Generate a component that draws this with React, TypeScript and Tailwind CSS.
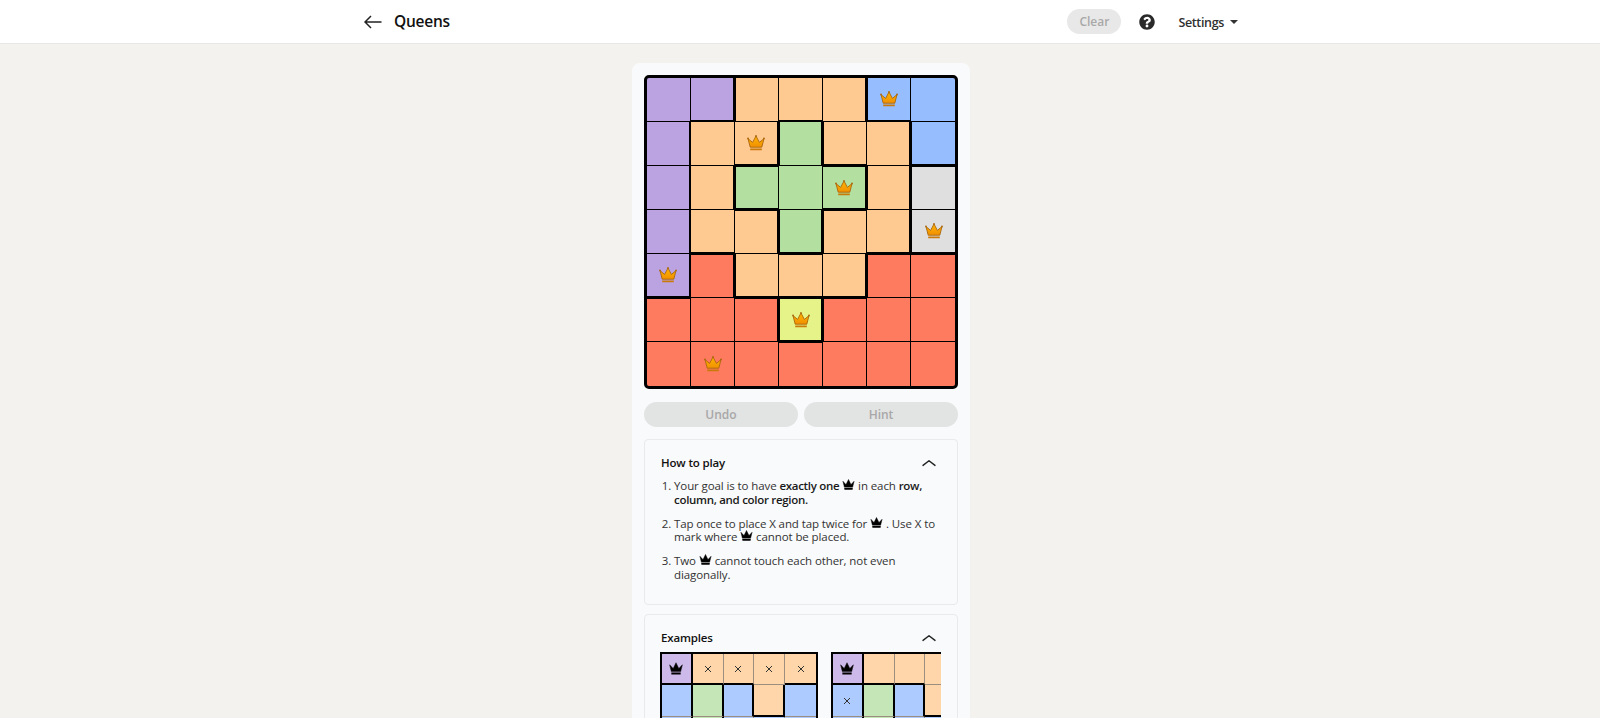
import React from 'react';
import { FaQuestionCircle } from 'react-icons/fa';

const board = ['PPOOOBB', 'POOGOOB', 'POGGGOW', 'POOGOOW', 'PROOORR', 'RRRYRRR', 'RRRRRRR'];
const queens = ['0-5', '1-2', '2-4', '3-6', '4-0', '5-3', '6-1'];

const cellColors: Record<string, string> = {
  P: 'bg-[#bba3e2]',
  O: 'bg-[#ffc992]',
  B: 'bg-[#96beff]',
  G: 'bg-[#b3dfa0]',
  W: 'bg-[#dfdfdf]',
  R: 'bg-[#ff7b60]',
  Y: 'bg-[#e6f388]',
};

const exampleColors: Record<string, string> = {
  P: 'bg-[#cdb9ea]',
  O: 'bg-[#ffd6aa]',
  B: 'bg-[#aecbff]',
  G: 'bg-[#c5e6b6]',
};

function GoldCrown() {
  return (
    <svg viewBox="0 0 18 16" className="h-4 w-[18px]">
      <defs>
        <linearGradient id="gold" x1="0" y1="0" x2="0" y2="1">
          <stop offset="0" stopColor="#ffb400" />
          <stop offset="1" stopColor="#f09000" />
        </linearGradient>
      </defs>
      <path d="M1 3.6 L5.6 7.4 L9 1 L12.4 7.4 L17 3.6 L14.8 12.2 H3.2 Z" fill="url(#gold)" stroke="#a9670c" strokeWidth="0.9" strokeLinejoin="round" />
      <circle cx="1" cy="3.4" r="0.9" fill="#a9670c" />
      <circle cx="17" cy="3.4" r="0.9" fill="#a9670c" />
      <circle cx="9" cy="0.9" r="0.9" fill="#a9670c" />
      <rect x="3.2" y="13.4" width="11.6" height="1.9" rx="0.3" fill="#c97a08" />
    </svg>
  );
}

function BlackCrown({ className }: { className: string }) {
  return (
    <svg viewBox="0 0 18 16" className={className}>
      <path d="M0.8 3.2 L5.4 8 L9 0.6 L12.6 8 L17.2 3.2 L15 12 H3 Z" fill="#000" stroke="#000" strokeWidth="0.6" strokeLinejoin="round" />
      <rect x="3" y="13.2" width="12" height="2.4" rx="0.3" fill="#000" />
    </svg>
  );
}

function InlineCrown() {
  return <BlackCrown className="inline-block h-[11px] w-[13px] align-[0px]" />;
}

function Chevron() {
  return (
    <svg viewBox="0 0 14 8" className="mr-[5px] h-[8px] w-[14px]">
      <path d="M1 6.4 L7 1.8 L13 6.4" fill="none" stroke="#222" strokeWidth="1.4" strokeLinecap="round" strokeLinejoin="round" />
    </svg>
  );
}

function Cross() {
  return (
    <svg viewBox="0 0 8 8" className="h-2 w-2">
      <path d="M1 1 L7 7 M7 1 L1 7" stroke="#333" strokeWidth="1" />
    </svg>
  );
}

function Board() {
  return (
    <div className="grid h-[314px] w-[314px] grid-cols-7 grid-rows-7 overflow-hidden rounded-[5px] border-[3px] border-black bg-black">
      {board.map((row, r) =>
        row.split('').map((c, i) => {
          const right = i < 6 && row[i + 1] !== c;
          const left = i > 1 && row[i - 1] !== c;
          const bottom = r < 6 && board[r + 1][i] !== c;
          const top = r > 1 && board[r - 1][i] !== c;
          return (
            <div
              key={`${r}-${i}`}
              className={`flex items-center justify-center border-black ${cellColors[c]} ${right ? 'border-r-2' : i < 6 ? 'border-r' : ''} ${left ? 'border-l' : ''} ${bottom ? 'border-b-2' : r < 6 ? 'border-b' : ''} ${top ? 'border-t' : ''}`}
            >
              {queens.includes(`${r}-${i}`) && <GoldCrown />}
            </div>
          );
        })
      )}
    </div>
  );
}

function ExampleGrid({ rows, marks }: { rows: string[]; marks: Record<string, 'q' | 'x'> }) {
  return (
    <div className="grid w-[158px] shrink-0 grid-cols-5 grid-rows-[31px_32px_32px] border-2 border-b-0 border-black">
      {rows.map((row, r) =>
        row.split('').map((c, i) => {
          const right = i < 4 && row[i + 1] !== c;
          const bottom = r < rows.length - 1 && rows[r + 1][i] !== c;
          const mark = marks[`${r}-${i}`];
          return (
            <div
              key={`${r}-${i}`}
              className={`flex items-center justify-center ${exampleColors[c]} ${right ? 'border-r-2 border-r-black' : i < 4 ? 'border-r border-r-[#9c8f80]' : ''} ${bottom ? 'border-b-2 border-b-black' : r < rows.length - 1 ? 'border-b border-b-[#9c8f80]' : ''}`}
            >
              {mark === 'q' && <BlackCrown className="h-[13px] w-[14px]" />}
              {mark === 'x' && <Cross />}
            </div>
          );
        })
      )}
    </div>
  );
}

export default function App() {
  return (
    <div className="h-screen overflow-hidden bg-[#f4f2ee] font-['Open_Sans','Noto_Sans',sans-serif] text-[#1f1f1f]">
      <header className="h-[44px] border-b border-[#e8e8e6] bg-white">
        <div className="mx-auto flex h-full w-[896px] items-center justify-between pl-[12px] pr-[10px]">
          <div className="flex items-center">
            <svg viewBox="0 0 18 14" className="h-[14px] w-[18px]">
              <path d="M17.5 7 H1 M7 1 L1 7 L7 13" fill="none" stroke="#222" strokeWidth="1.5" />
            </svg>
            <h1 className="ml-[12px] text-[15.5px] font-semibold tracking-[-0.25px] text-[#111]">Queens</h1>
          </div>
          <div className="flex items-center">
            <button className="h-[25px] w-[54px] rounded-full bg-[#e8e8e8] text-[12px] font-semibold text-[#a8a8a8]">Clear</button>
            <FaQuestionCircle className="ml-[18px] h-4 w-4 text-[#2a2a2a]" />
            <span className="ml-[23px] mt-[3px] text-[12.5px] font-semibold tracking-[-0.35px] text-[#2f2f2f]">Settings</span>
            <span className="ml-[6px] h-0 w-0 border-x-[4px] border-t-[4px] border-x-transparent border-t-[#333]" />
          </div>
        </div>
      </header>
      <main className="ml-[632px] mt-[19px] w-[338px] rounded-lg bg-[#f9fafb] px-[12px] pt-[12px]">
        <Board />
        <div className="mt-[13px] flex gap-[6px]">
          <button className="h-[25px] flex-1 rounded-full bg-[#e2e3e3] text-[12px] font-semibold text-[#a8a8a8]">Undo</button>
          <button className="h-[25px] flex-1 rounded-full bg-[#e2e3e3] text-[12px] font-semibold text-[#a8a8a8]">Hint</button>
        </div>
        <section className="mt-[12px] h-[166px] rounded-[4px] border border-[#e8eaec] pl-[16px] pr-[16px] pt-[14px]">
          <div className="flex items-center justify-between">
            <h2 className="text-[11.5px] font-semibold tracking-[-0.15px] text-[#111]">How to play</h2>
            <Chevron />
          </div>
          <ol className="mt-[8px] list-decimal pl-[13px] text-[11.5px] leading-[13.5px] tracking-[-0.1px] text-[#333]">
            <li className="mb-[10.5px]">
              Your goal is to have <b className="font-semibold tracking-[-0.3px] text-[#1a1a1a]">exactly one</b> <InlineCrown /> in each{' '}
              <b className="font-semibold tracking-[-0.3px] text-[#1a1a1a]">row, column, and color region.</b>
            </li>
            <li className="mb-[10.5px]">
              Tap once to place X and tap twice for <InlineCrown /> . Use X to mark where <InlineCrown /> cannot be placed.
            </li>
            <li>
              Two <InlineCrown /> cannot touch each other, not even diagonally.
            </li>
          </ol>
        </section>
        <section className="mt-[9px] rounded-[4px] border border-[#e8eaec] pl-[15px] pr-[16px] pt-[14px]">
          <div className="flex items-center justify-between">
            <h2 className="pl-[1px] text-[11.5px] font-semibold tracking-[-0.15px] text-[#111]">Examples</h2>
            <Chevron />
          </div>
          <div className="mt-[6px] flex gap-[13px] overflow-hidden">
            <ExampleGrid
              rows={['POOOO', 'BGBOB', 'BGBBB']}
              marks={{ '0-0': 'q', '0-1': 'x', '0-2': 'x', '0-3': 'x', '0-4': 'x' }}
            />
            <ExampleGrid rows={['POOOO', 'BGBOB', 'BGBBB']} marks={{ '0-0': 'q', '1-0': 'x' }} />
          </div>
        </section>
      </main>
    </div>
  );
}
